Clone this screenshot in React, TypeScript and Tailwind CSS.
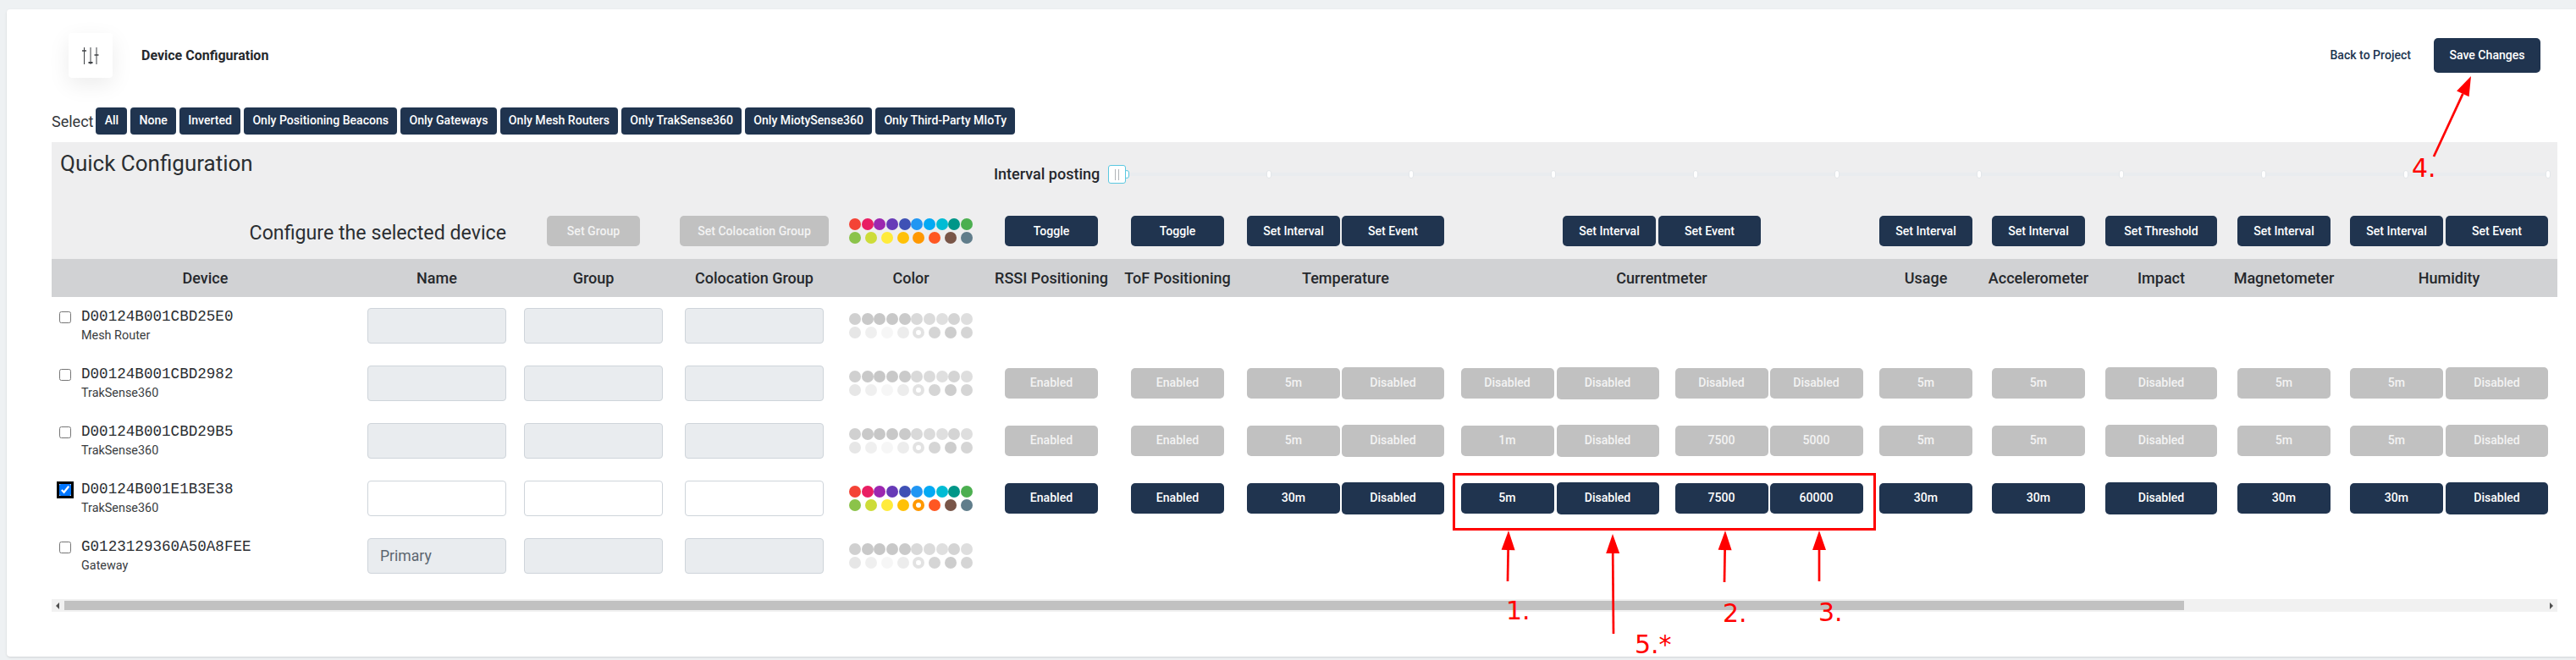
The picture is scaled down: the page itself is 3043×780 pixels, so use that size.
import React from "react";

const gridCols =
  "grid grid-cols-[363px_184px_186px_194px_176px_156px_142px_255px_492px_132px_134px_156px_134px_256px]";

const colors = [
  "bg-[#f44336]", "bg-[#e91e63]", "bg-[#9c27b0]", "bg-[#673ab7]", "bg-[#3f51b5]", "bg-[#2196f3]", "bg-[#03a9f4]", "bg-[#00bcd4]", "bg-[#009688]",
  "bg-[#4caf50]", "bg-[#8bc34a]", "bg-[#cddc39]", "bg-[#ffeb3b]", "bg-[#ffc107]", "bg-[#ff9800]", "bg-[#ff5722]", "bg-[#795548]", "bg-[#607d8b]",
];

const Btn = ({ label, off, w = "w-[110px]", tall }: { label: string; off?: boolean; w?: string; tall?: boolean }) => (
  <button
    className={`${w} ${tall ? "h-[38px]" : "h-[36px]"} ${
      off ? "bg-[#c1c1c1] text-[#f3f3f3]" : "bg-[#20344f] text-white"
    } rounded-[5px] text-[14.08px] font-medium`}
  >
    {label}
  </button>
);

const Dots = ({ off, ring }: { off?: boolean; ring?: boolean }) => (
  <div className={`w-[146px] flex flex-wrap justify-between gap-y-[2px] ${off ? "grayscale opacity-30" : ""}`}>
    {colors.map((c, i) =>
      ring && i === 14 ? (
        <span key={c} className="w-[14px] h-[14px] rounded-full border-[4px] border-[#ff9800] bg-white" />
      ) : (
        <span key={c} className={`w-[14px] h-[14px] rounded-full ${c}`} />
      )
    )}
  </div>
);

const Field = ({ off, value }: { off?: boolean; value?: string }) => (
  <input
    disabled={off}
    defaultValue={value}
    className={`w-[164px] h-[42px] px-[14px] border border-[#ced4da] rounded-[4px] text-[17.6px] text-[#5c6670] ${
      off ? "bg-[#e9ecef]" : "bg-white"
    }`}
  />
);

type Row = {
  id: string;
  type: string;
  name?: string;
  checked?: boolean;
  buttons?: {
    rssi: string;
    tof: string;
    temp: string;
    cur: [string, string, string, string];
    usage: string;
    accel: string;
    magnet: string;
    hum: string;
  };
};

const rows: Row[] = [
  { id: "D00124B001CBD25E0", type: "Mesh Router" },
  {
    id: "D00124B001CBD2982",
    type: "TrakSense360",
    buttons: { rssi: "Enabled", tof: "Enabled", temp: "5m", cur: ["Disabled", "Disabled", "Disabled", "Disabled"], usage: "5m", accel: "5m", magnet: "5m", hum: "5m" },
  },
  {
    id: "D00124B001CBD29B5",
    type: "TrakSense360",
    buttons: { rssi: "Enabled", tof: "Enabled", temp: "5m", cur: ["1m", "Disabled", "7500", "5000"], usage: "5m", accel: "5m", magnet: "5m", hum: "5m" },
  },
  {
    id: "D00124B001E1B3E38",
    type: "TrakSense360",
    checked: true,
    buttons: { rssi: "Enabled", tof: "Enabled", temp: "30m", cur: ["5m", "Disabled", "7500", "60000"], usage: "30m", accel: "30m", magnet: "30m", hum: "30m" },
  },
  { id: "G0123129360A50A8FEE", type: "Gateway", name: "Primary" },
];

const selectButtons = [
  "All", "None", "Inverted", "Only Positioning Beacons", "Only Gateways", "Only Mesh Routers", "Only TrakSense360", "Only MiotySense360", "Only Third-Party MIoTy",
];

const headers = [
  "Device", "Name", "Group", "Colocation Group", "Color", "RSSI Positioning", "ToF Positioning", "Temperature", "Currentmeter", "Usage", "Accelerometer", "Impact", "Magnetometer", "Humidity",
];

const cell = "flex items-center justify-center";

const Arrow = ({ x1, y1, x2, y2 }: { x1: number; y1: number; x2: number; y2: number }) => {
  const len = Math.hypot(x2 - x1, y2 - y1);
  const ux = (x2 - x1) / len;
  const uy = (y2 - y1) / len;
  const bx = x2 - ux * 23;
  const by = y2 - uy * 23;
  return (
    <g>
      <line x1={x1} y1={y1} x2={bx} y2={by} stroke="#ff0000" strokeWidth={2.7} />
      <polygon points={`${x2},${y2} ${bx - uy * 8},${by + ux * 8} ${bx + uy * 8},${by - ux * 8}`} fill="#ff0000" />
    </g>
  );
};

const Note = ({ text, className }: { text: string; className: string }) => (
  <div className={`absolute text-[30px] leading-[30px] text-[#ff0000] font-['DejaVu_Sans',sans-serif] ${className}`}>{text}</div>
);

const App = () => {
  return (
    <div className="relative w-[3043px] h-[780px] overflow-hidden bg-[#eef1f3] pt-[11px] pl-[8px] pb-[4px] font-['Roboto',sans-serif] text-[#25282c]">
      <div className="h-full bg-white rounded-l-[4px] shadow-sm pt-[28px] pl-[53px] pr-[22px]">
        {/* header */}
        <div className="flex items-center justify-between h-[53px]">
          <div className="flex items-center ml-[20px]">
            <div className="w-[52px] h-[53px] rounded-[4px] bg-white shadow-[0_8px_26px_rgba(0,0,0,0.08)] flex items-center justify-center">
              <svg width="24" height="24" viewBox="0 0 24 24" fill="none" stroke="#3f4246" strokeWidth="1">
                <path d="M4.5 2v20M12 2v20M19 2v20" />
                <path d="M2 6h5M16.5 11h5" strokeWidth="1.5" />
                <path d="M9.5 20h5" strokeWidth="2" />
              </svg>
            </div>
            <div className="ml-[34px] text-[16px] font-bold text-[#25282c]">Device Configuration</div>
          </div>
          <div className="flex items-center mr-[20px]">
            <span className="text-[14.08px] font-medium text-[#20344f]">Back to Project</span>
            <button className="ml-[27px] w-[126px] h-[41px] rounded-[5px] bg-[#20344f] text-white text-[14.08px] font-medium">
              Save Changes
            </button>
          </div>
        </div>

        {/* select row */}
        <div className="flex items-center mt-[35px] h-[32px]">
          <span className="text-[18px] text-[#33363a] mr-[3px]">Select</span>
          <div className="flex gap-[4px]">
            {selectButtons.map((b) => (
              <button key={b} className="h-[32px] px-[10.2px] rounded-[4px] bg-[#20344f] text-white text-[14.08px] font-medium">
                {b}
              </button>
            ))}
          </div>
        </div>

        {/* quick config */}
        <div className="mt-[9px] h-[138px] bg-[#eeeeef]">
          <div className={`${gridCols} h-[86px]`}>
            <div className="col-span-5 pl-[10px] pt-[6px] text-[26px] leading-[38px] text-[#2b2e32]">Quick Configuration</div>
            <div className="col-span-9 flex items-start pt-[26px] pl-[10px]">
              <span className="text-[18px] font-medium leading-[24px] w-[135px] whitespace-nowrap">Interval posting</span>
              <div className="relative flex items-center justify-between w-[1685px] h-[4px] mt-[10px] ml-[19px] bg-[#e9ecef]">
                {[0, 1, 2, 3, 4, 5, 6, 7, 8, 9, 10].map((n) => (
                  <span key={n} className={`w-[6px] h-[10px] rounded-full bg-white border ${n === 0 ? "border-[#5bc8e0]" : "border-[#e3e6e9]"}`} />
                ))}
                <div className="absolute left-[-19px] top-[-9px] w-[21px] h-[22px] rounded-[3px] bg-white border border-[#5bc8e0] flex items-center justify-center gap-[3px]">
                  <span className="w-px h-[13px] bg-[#b0b4b8]" />
                  <span className="w-px h-[13px] bg-[#b0b4b8]" />
                </div>
              </div>
            </div>
          </div>
          <div className={`${gridCols} h-[36px]`}>
            <div className="col-span-2 flex items-center justify-end pr-[10px] pt-[4px] text-[23.2px] text-[#2b2e32] whitespace-nowrap">Configure the selected device</div>
            <div className={cell}><Btn label="Set Group" off /></div>
            <div className={cell}><Btn label="Set Colocation Group" off w="w-[176px]" /></div>
            <div className={cell}><Dots /></div>
            <div className={cell}><Btn label="Toggle" /></div>
            <div className={cell}><Btn label="Toggle" /></div>
            <div className={`${cell} gap-[2px]`}><Btn label="Set Interval" /><Btn label="Set Event" w="w-[121px]" /></div>
            <div className={`${cell} gap-[3px]`}><Btn label="Set Interval" /><Btn label="Set Event" w="w-[121px]" /></div>
            <div className={cell}><Btn label="Set Interval" /></div>
            <div className={cell}><Btn label="Set Interval" /></div>
            <div className={cell}><Btn label="Set Threshold" w="w-[132px]" /></div>
            <div className={cell}><Btn label="Set Interval" /></div>
            <div className={`${cell} gap-[3px]`}><Btn label="Set Interval" /><Btn label="Set Event" w="w-[121px]" /></div>
          </div>
        </div>

        {/* table head */}
        <div className={`${gridCols} h-[45px] bg-[#d1d2d4]`}>
          {headers.map((h) => (
            <div key={h} className={`${cell} text-[18px] font-medium whitespace-nowrap`}>{h}</div>
          ))}
        </div>

        {/* table rows */}
        {rows.map((r) => {
          const off = !r.checked;
          const b = r.buttons;
          return (
            <div key={r.id} className={`${gridCols} h-[68px]`}>
              <div className="flex items-start self-center pl-[9px]">
                <input
                  type="checkbox"
                  defaultChecked={r.checked}
                  className={`w-[14px] h-[14px] mt-[6px] accent-[#0075ff] ${r.checked ? "outline-[3px] outline-black rounded-[2px]" : ""}`}
                />
                <div className="ml-[12px]">
                  <div className="font-['Liberation_Mono',monospace] text-[17.6px] leading-[24px] text-[#2b2e32]">{r.id}</div>
                  <div className="text-[14.4px] leading-[22px] text-[#3a3d41]">{r.type}</div>
                </div>
              </div>
              <div className={cell}><Field off={off} value={r.name} /></div>
              <div className={cell}><Field off={off} /></div>
              <div className={cell}><Field off={off} /></div>
              <div className={cell}><Dots off={off} ring /></div>
              {b && (
                <>
                  <div className={cell}><Btn label={b.rssi} off={off} /></div>
                  <div className={cell}><Btn label={b.tof} off={off} /></div>
                  <div className={`${cell} gap-[2px]`}><Btn label={b.temp} off={off} /><Btn label="Disabled" off={off} w="w-[121px]" tall /></div>
                  <div className={`${cell}`}>
                    <div className={`${cell} gap-[3px]`}><Btn label={b.cur[0]} off={off} /><Btn label={b.cur[1]} off={off} w="w-[121px]" tall /></div>
                    <div className={`${cell} gap-[2px] ml-[19px]`}><Btn label={b.cur[2]} off={off} /><Btn label={b.cur[3]} off={off} /></div>
                  </div>
                  <div className={cell}><Btn label={b.usage} off={off} /></div>
                  <div className={cell}><Btn label={b.accel} off={off} /></div>
                  <div className={cell}><Btn label="Disabled" off={off} w="w-[132px]" tall /></div>
                  <div className={cell}><Btn label={b.magnet} off={off} /></div>
                  <div className={`${cell} gap-[3px]`}><Btn label={b.hum} off={off} /><Btn label="Disabled" off={off} w="w-[121px]" tall /></div>
                </>
              )}
            </div>
          );
        })}

        {/* scrollbar */}
        <div className="relative mt-[17px] h-[15px] bg-[#f1f1f1] flex items-center">
          <span className="absolute left-[5px] border-y-[4px] border-y-transparent border-r-[4px] border-r-[#505050]" />
          <div className="ml-[15px] w-[2504px] h-[11px] bg-[#c1c1c1]" />
          <span className="absolute right-[5px] border-y-[4px] border-y-transparent border-l-[4px] border-l-[#505050]" />
        </div>
      </div>

      {/* red annotations drawn over the screenshot */}
      <div className="absolute left-[1716px] top-[559px] w-[500px] h-[68px] border-[3px] border-[#ff0000]" />
      <svg className="absolute left-0 top-0 pointer-events-none" width="3043" height="780">
        <Arrow x1={1781} y1={687} x2={1782} y2={627} />
        <Arrow x1={1906} y1={749} x2={1905} y2={631} />
        <Arrow x1={2037} y1={688} x2={2038} y2={627} />
        <Arrow x1={2149} y1={687} x2={2149} y2={627} />
        <Arrow x1={2875} y1={185} x2={2919} y2={90} />
      </svg>
      <Note text="1." className="left-[1779px] top-[707px]" />
      <Note text="5.*" className="left-[1931px] top-[747px]" />
      <Note text="2." className="left-[2035px] top-[710px]" />
      <Note text="3." className="left-[2148px] top-[709px]" />
      <Note text="4." className="left-[2849px] top-[184px]" />
    </div>
  );
};

export default App;
